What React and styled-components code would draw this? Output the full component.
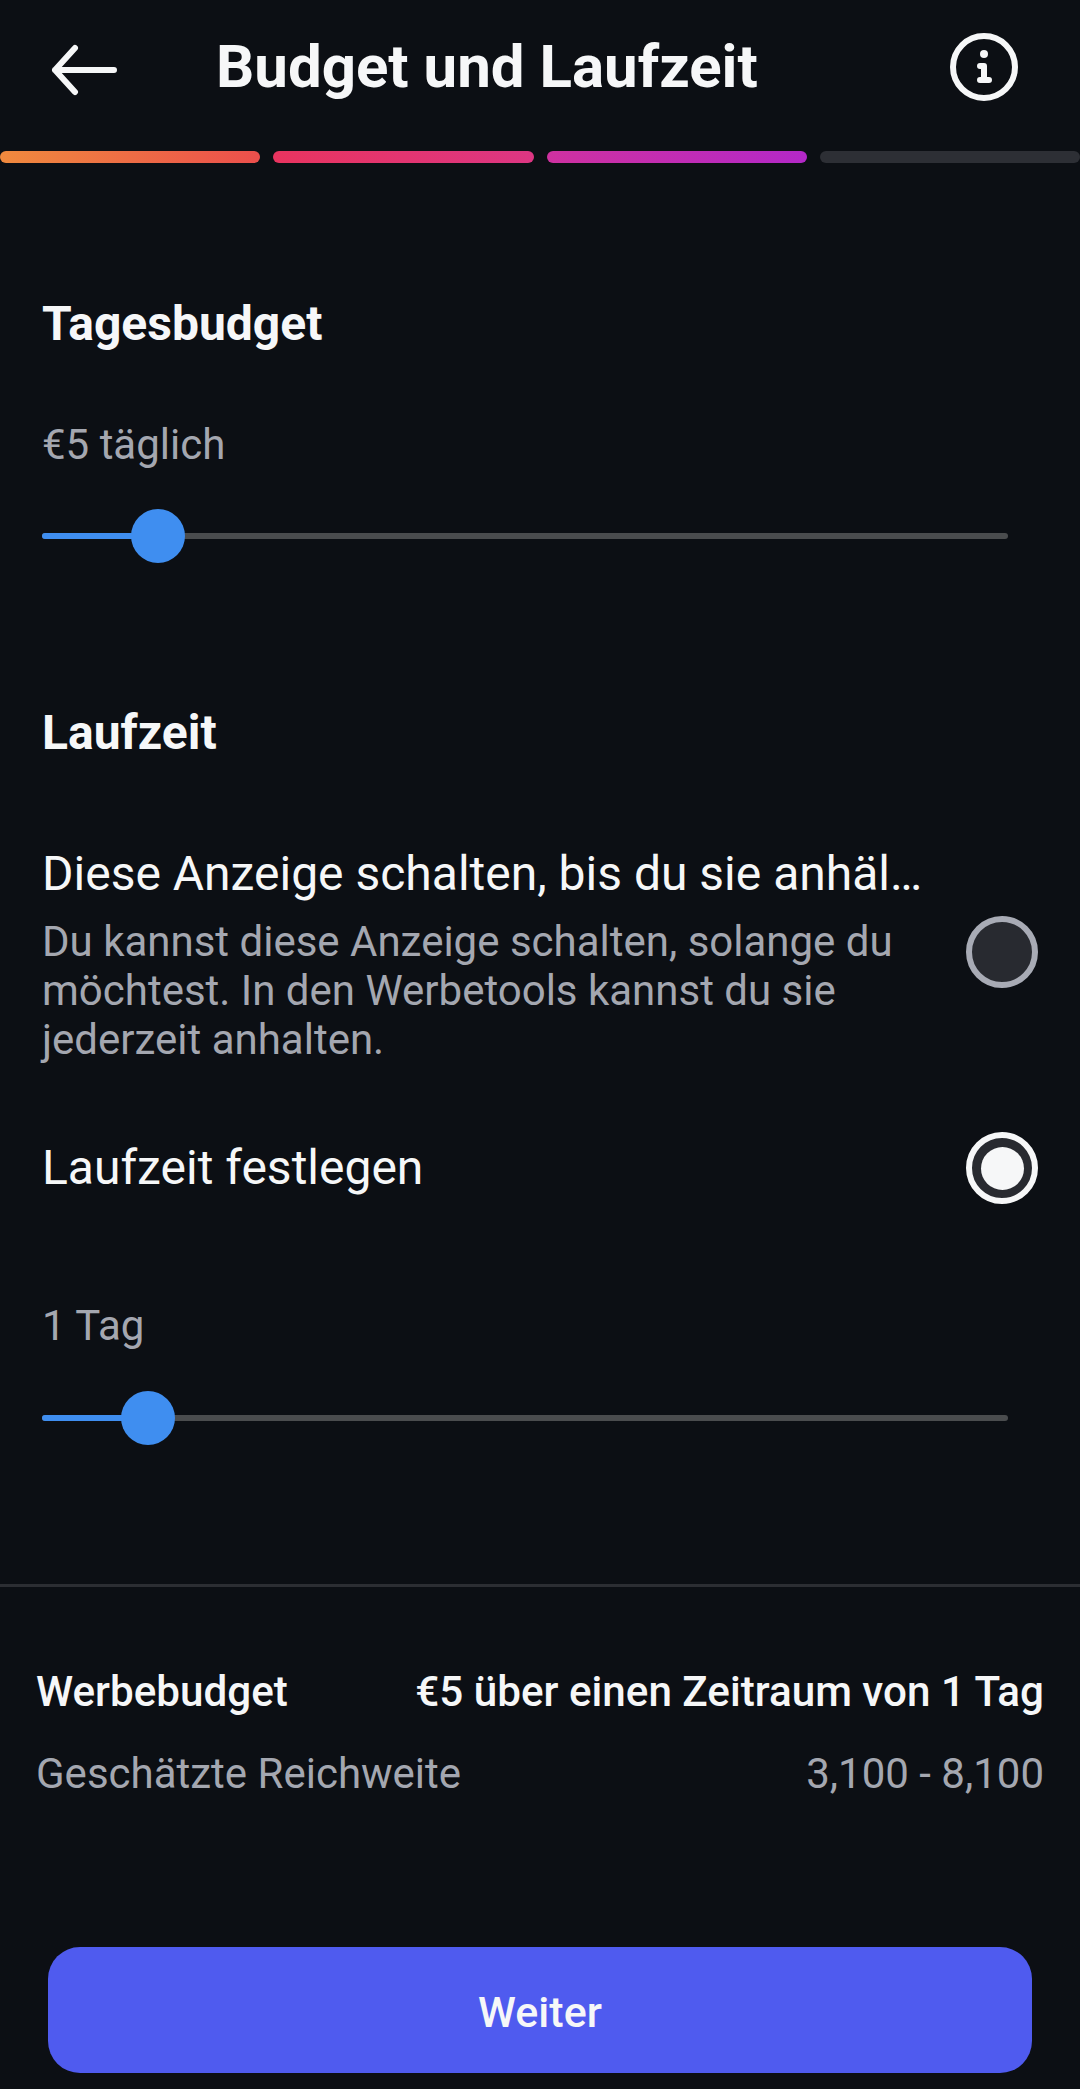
import React from 'react';
import styled, { createGlobalStyle } from 'styled-components';

const GlobalStyle = createGlobalStyle`
  html, body {
    margin: 0;
    padding: 0;
    background: #0c0f14;
  }
  * {
    box-sizing: border-box;
  }
`;

const Page = styled.div`
  width: 1080px;
  height: 2089px;
  background: #0c0f14;
  color: #f6f7f8;
  font-family: Roboto, "Liberation Sans", sans-serif;
  display: flex;
  flex-direction: column;
  overflow: hidden;
`;

const Header = styled.div`
  height: 151px;
  padding: 0 62px 0 50px;
  display: flex;
  align-items: center;
  justify-content: space-between;
`;

const Title = styled.div`
  flex: 1;
  padding-left: 98px;
  font-size: 60px;
  font-weight: 700;
  line-height: 64px;
  margin-top: -18px;
`;

const HeaderIcon = styled.svg`
  display: block;
  margin-top: ${(p) => p.$top}px;
`;

const Progress = styled.div`
  display: grid;
  grid-template-columns: repeat(4, 1fr);
  gap: 13px;
`;

const Step = styled.div`
  height: 12px;
  border-radius: 6px;
  background: ${(p) => p.$bg};
`;

const Body = styled.div`
  flex: 1;
  padding: 0 42px;
`;

const Heading = styled.div`
  font-size: 48px;
  font-weight: 700;
  line-height: 54px;
  margin-top: ${(p) => p.$top}px;
`;

const Value = styled.div`
  font-size: 42px;
  line-height: 48px;
  color: #a4a7b0;
  margin-top: ${(p) => p.$top}px;
`;

const Track = styled.div`
  position: relative;
  width: 966px;
  height: 6px;
  background: #4a4c4e;
  border-radius: 3px;
  margin-top: ${(p) => p.$top}px;
`;

const Fill = styled.div`
  height: 6px;
  border-radius: 3px 0 0 3px;
  background: #3f8ef0;
`;

const Thumb = styled.div`
  position: absolute;
  top: -24px;
  width: 54px;
  height: 54px;
  margin-left: -27px;
  border-radius: 50%;
  background: #3f8ef0;
`;

const Slider = ({ at, top }) => (
  <Track $top={top}>
    <Fill style={{ width: at }} />
    <Thumb style={{ left: at }} />
  </Track>
);

const OptionRow = styled.div`
  display: flex;
  align-items: center;
  justify-content: space-between;
  margin-top: ${(p) => p.$top}px;
`;

const OptionText = styled.div`
  width: 890px;
`;

const OptionTitle = styled.div`
  font-size: 48px;
  line-height: 54px;
  white-space: nowrap;
`;

const OptionHint = styled.div`
  font-size: 42px;
  line-height: 49px;
  color: #a4a7b0;
  margin-top: 16px;
`;

const Radio = styled.div`
  flex: none;
  width: 72px;
  height: 72px;
  margin-bottom: ${(p) => (p.$on ? 0 : 8)}px;
  border-radius: 50%;
  border: 6px solid ${(p) => (p.$on ? '#f6f7f8' : '#a8abb5')};
  background: #282a30;
  display: flex;
  align-items: center;
  justify-content: center;
  &::after {
    content: '';
    display: ${(p) => (p.$on ? 'block' : 'none')};
    width: 43px;
    height: 43px;
    border-radius: 50%;
    background: #f6f7f8;
  }
`;

const Divider = styled.div`
  height: 3px;
  background: #2c2e33;
`;

const Summary = styled.div`
  padding: 0 36px;
  height: 360px;
`;

const SummaryRow = styled.div`
  display: flex;
  justify-content: space-between;
  margin-top: ${(p) => p.$top}px;
  font-size: ${(p) => (p.$strong ? 42.2 : 42)}px;
  font-weight: ${(p) => (p.$strong ? 500 : 400)};
  line-height: 48px;
  color: ${(p) => (p.$strong ? '#f6f7f8' : '#a4a7b0')};
`;

const NextButton = styled.button`
  display: block;
  width: 984px;
  height: 126px;
  margin: 0 0 16px 48px;
  padding: 4px 0 0;
  border: 0;
  border-radius: 32px;
  background: #4f5bef;
  color: #f6f7f8;
  font-family: inherit;
  font-size: 43px;
  font-weight: 500;
`;

export default function App() {
  return (
    <Page>
      <GlobalStyle />
      <Header>
        <HeaderIcon $top={-11} width="68" height="52" viewBox="0 0 68 52" fill="none" stroke="#f6f7f8" strokeWidth="6" strokeLinecap="round" strokeLinejoin="round">
          <path d="M64 26H5M25 4L5 26l20 22" />
        </HeaderIcon>
        <Title>Budget und Laufzeit</Title>
        <HeaderIcon $top={-17} width="68" height="68" viewBox="0 0 68 68" fill="none" stroke="#f6f7f8" strokeLinecap="round" strokeLinejoin="round">
          <circle cx="34" cy="34" r="31" strokeWidth="6" />
          <circle cx="34" cy="21" r="4" fill="#f6f7f8" stroke="none" />
          <path d="M30 33h4v14M30 47h9" strokeWidth="6" />
        </HeaderIcon>
      </Header>
      <Progress>
        <Step $bg="linear-gradient(90deg, #f08a3e, #ec4f4c)" />
        <Step $bg="linear-gradient(90deg, #e9345f, #dd3683)" />
        <Step $bg="linear-gradient(90deg, #cf31a0, #b328c8)" />
        <Step $bg="#2d2f35" />
      </Progress>
      <Body>
        <Heading $top={134}>Tagesbudget</Heading>
        <Value $top={70}>€5 täglich</Value>
        <Slider at="116px" top={64} />
        <Heading $top={167}>Laufzeit</Heading>
        <OptionRow $top={87}>
          <OptionText>
            <OptionTitle>Diese Anzeige schalten, bis du sie anhäl…</OptionTitle>
            <OptionHint>
              Du kannst diese Anzeige schalten, solange du möchtest. In den Werbetools kannst du sie jederzeit anhalten.
            </OptionHint>
          </OptionText>
          <Radio />
        </OptionRow>
        <OptionRow $top={68}>
          <OptionTitle>Laufzeit festlegen</OptionTitle>
          <Radio $on />
        </OptionRow>
        <Value $top={98}>1 Tag</Value>
        <Slider at="106px" top={65} />
      </Body>
      <Divider />
      <Summary>
        <SummaryRow $strong $top={81}>
          <span>Werbebudget</span>
          <span>€5 über einen Zeitraum von 1 Tag</span>
        </SummaryRow>
        <SummaryRow $top={34}>
          <span>Geschätzte Reichweite</span>
          <span>3,100 - 8,100</span>
        </SummaryRow>
      </Summary>
      <NextButton>Weiter</NextButton>
    </Page>
  );
}
